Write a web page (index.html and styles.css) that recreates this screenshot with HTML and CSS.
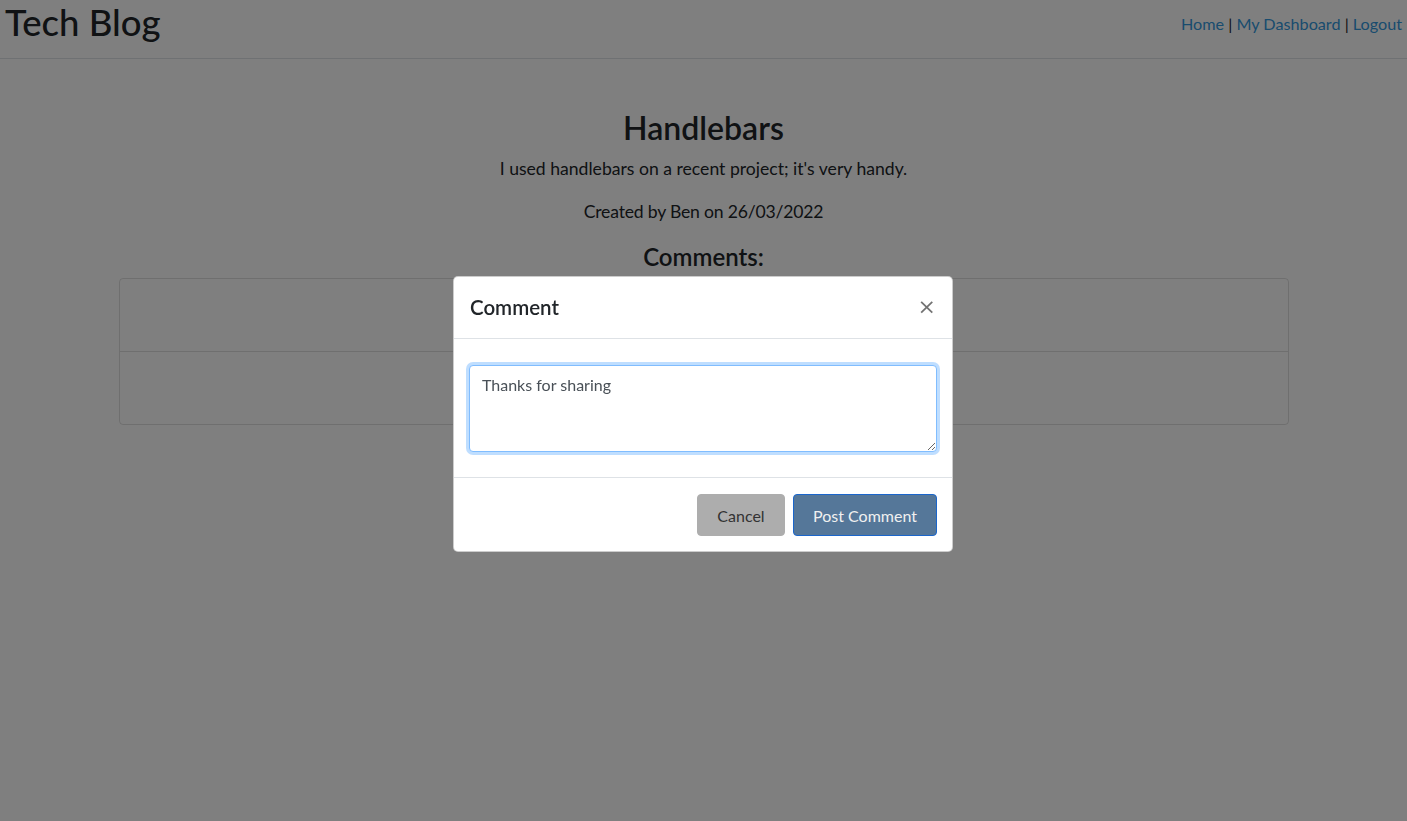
FILE: index.html
```html
<!DOCTYPE html>
<html lang="en">
<head>
<meta charset="utf-8">
<title>Tech Blog</title>
<link rel="stylesheet" href="styles.css">
</head>
<body>
<header class="site-header">
  <h1 class="brand">Tech Blog</h1>
  <nav class="nav">
    <a href="#">Home</a> | <a href="#">My Dashboard</a> | <a href="#">Logout</a>
  </nav>
</header>
<main class="post">
  <h2 class="post-title">Handlebars</h2>
  <p class="post-body">I used handlebars on a recent project; it's very handy.</p>
  <p class="post-meta">Created by Ben on 26/03/2022</p>
  <h4 class="comments-title">Comments:</h4>
  <ul class="comment-list">
    <li class="comment-item"></li>
    <li class="comment-item"></li>
  </ul>
</main>

<div class="backdrop"></div>
<div class="modal-wrap">
  <div class="modal">
    <div class="modal-header">
      <h5 class="modal-title">Comment</h5>
      <button class="close" type="button" aria-label="Close">&times;</button>
    </div>
    <div class="modal-body">
      <textarea class="comment-input">Thanks for sharing</textarea>
    </div>
    <div class="modal-footer">
      <button class="btn btn-cancel" type="button">Cancel</button>
      <button class="btn btn-post" type="button">Post Comment</button>
    </div>
  </div>
</div>
</body>
</html>
```

FILE: styles.css
```css
* { box-sizing: border-box; }
html, body { height: 100%; }
body {
  margin: 0;
  font-family: "Segoe UI", Lato, "Noto Sans", sans-serif;
  font-size: 16px;
  line-height: 1.5;
  color: #212529;
  background: #fff;
}
.site-header {
  display: flex;
  justify-content: space-between;
  align-items: flex-start;
  border-bottom: 1px solid #dee2e6;
  height: 59px;
  padding: 0 5px 0 5px;
}
.brand {
  margin: 0;
  font-size: 36.5px;
  font-weight: 500;
  line-height: 1.25;
}
.nav {
  padding-top: 12px;
  font-size: 16.2px;
}
.nav a { color: #3398dd; text-decoration: none; }
.post {
  text-align: center;
  padding-top: 50px;
}
.post-title {
  margin: 0 0 9px;
  font-size: 32px;
  font-weight: 600;
  line-height: 1.2;
}
.post-body, .post-meta {
  margin: 0 0 16px;
  font-size: 17.6px;
  line-height: 1.5;
}
.post-meta { letter-spacing: -0.2px; }
.comments-title {
  margin: 0 0 6px;
  padding-top: 2px;
  font-size: 24px;
  font-weight: 600;
  line-height: 1.2;
}
.comment-list {
  list-style: none;
  margin: 0 auto;
  padding: 0;
  width: 1170px;
  border: 1px solid rgba(0,0,0,.125);
  border-radius: 4px;
}
.comment-item {
  height: 73px;
  border-bottom: 1px solid rgba(0,0,0,.125);
}
.comment-item:last-child { border-bottom: 0; height: 72px; }

.backdrop {
  position: fixed;
  inset: 0;
  background: rgba(0,0,0,.5);
}
.modal-wrap {
  position: fixed;
  inset: 0;
  display: flex;
  align-items: center;
  justify-content: center;
  padding-top: 7px;
  padding-right: 1px;
}
.modal {
  width: 500px;
  background: #fff;
  border: 1px solid rgba(0,0,0,.2);
  border-radius: 5px;
}
.modal-header {
  display: flex;
  justify-content: space-between;
  align-items: center;
  height: 62px;
  padding: 0 16px;
  border-bottom: 1px solid #dee2e6;
}
.modal-title {
  margin: 0;
  font-size: 20.5px;
  font-weight: 600;
  line-height: 1.5;
}
.close {
  border: 0;
  background: transparent;
  padding: 0;
  margin: -2px 0 0 0;
  font-family: "DejaVu Sans", sans-serif;
  font-size: 22px;
  font-weight: 400;
  line-height: 1;
  color: #000;
  opacity: .55;
  cursor: pointer;
}
.modal-body { padding: 26px 15px 25px; }
.comment-input {
  display: block;
  width: 100%;
  height: 87px;
  padding: 7px 12px;
  font-family: inherit;
  font-size: 16px;
  line-height: 1.5;
  color: #495057;
  border: 1px solid #80bdff;
  border-radius: 4px;
  outline: 0;
  box-shadow: 0 0 0 3px rgba(0,123,255,.25);
  resize: vertical;
}
.modal-footer {
  display: flex;
  justify-content: flex-end;
  gap: 8px;
  padding: 16px 15px 15px;
  border-top: 1px solid #dee2e6;
}
.btn {
  height: 42px;
  padding: 0;
  font-family: inherit;
  font-size: 16px;
  border-radius: 4px;
  cursor: pointer;
}
.btn-cancel {
  width: 88px;
  background: #adadad;
  color: #333;
  border: 1px solid #adadad;
}
.btn-post {
  width: 144px;
  background: #557799;
  color: #f0f0f0;
  border: 1px solid #1a66cc;
}
```
